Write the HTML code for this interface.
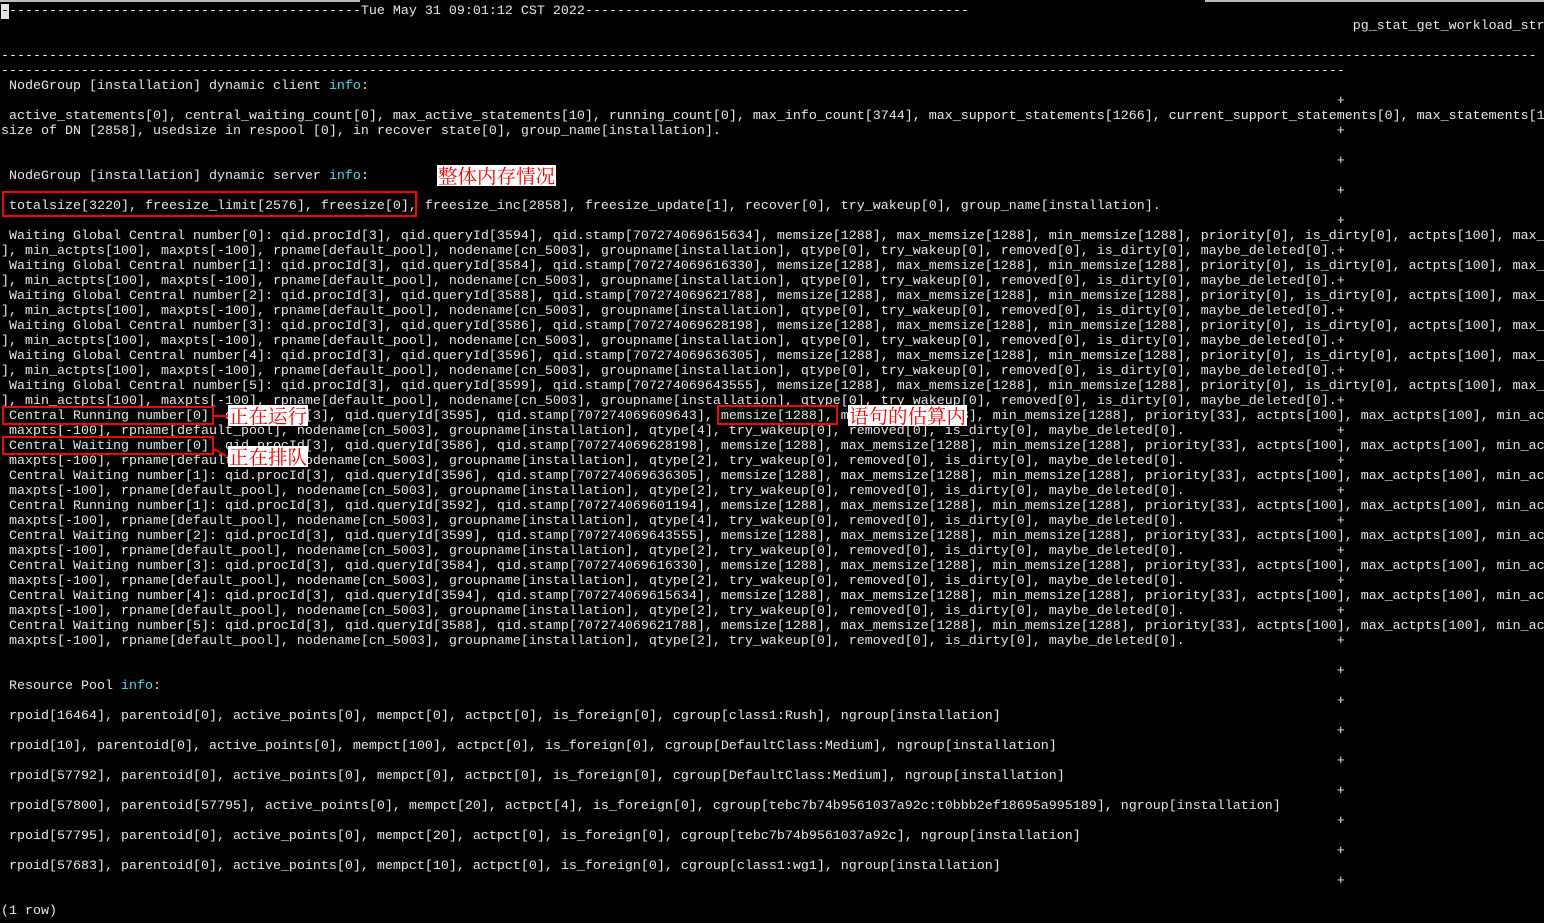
<!DOCTYPE html>
<html><head><meta charset="utf-8"><style>
html,body{margin:0;padding:0;background:#000;width:1544px;height:923px;overflow:hidden}
#w{position:absolute;left:0;top:0;width:1544px;height:923px;overflow:hidden}
pre{position:absolute;left:1px;top:4px;margin:0;font-family:"Liberation Mono","DejaVu Sans Mono",monospace;font-size:13.33px;line-height:15px;color:#e6e6e6;white-space:pre;width:1543px;overflow:hidden}
.c{color:#3fe0ea}
.cur{background:#e6e6e6;color:#000}
.box{position:absolute;border:2px solid #f00;box-sizing:border-box}
.lab{position:absolute;background:#fff;color:#f00;font-family:"Noto Serif CJK SC","Liberation Serif",serif;font-size:19.5px;line-height:21px;height:21px;white-space:nowrap;padding:0 1px}
.bar{position:absolute;top:0;height:2px;background:#bbb}
.arr{position:absolute;height:2px;background:#f00}
</style></head><body><div id="w">
<div class="bar" style="left:0;width:360px"></div>
<div class="bar" style="left:1205px;width:339px"></div>
<pre><span class="cur">-</span>--------------------------------------------Tue May 31 09:01:12 CST 2022------------------------------------------------
                                                                                                                                                                         pg_stat_get_workload_str

------------------------------------------------------------------------------------------------------------------------------------------------------------------------------------------------
------------------------------------------------------------------------------------------------------------------------------------------------------------------------
 NodeGroup [installation] dynamic client <span class="c">info</span>:
                                                                                                                                                                       +
 active_statements[0], central_waiting_count[0], max_active_statements[10], running_count[0], max_info_count[3744], max_support_statements[1266], current_support_statements[0], max_statements[1
size of DN [2858], usedsize in respool [0], in recover state[0], group_name[installation].                                                                             +

                                                                                                                                                                       +
 NodeGroup [installation] dynamic server <span class="c">info</span>:
                                                                                                                                                                       +
 totalsize[3220], freesize_limit[2576], freesize[0], freesize_inc[2858], freesize_update[1], recover[0], try_wakeup[0], group_name[installation].
                                                                                                                                                                       +
 Waiting Global Central number[0]: qid.procId[3], qid.queryId[3594], qid.stamp[707274069615634], memsize[1288], max_memsize[1288], min_memsize[1288], priority[0], is_dirty[0], actpts[100], max_
], min_actpts[100], maxpts[-100], rpname[default_pool], nodename[cn_5003], groupname[installation], qtype[0], try_wakeup[0], removed[0], is_dirty[0], maybe_deleted[0].+
 Waiting Global Central number[1]: qid.procId[3], qid.queryId[3584], qid.stamp[707274069616330], memsize[1288], max_memsize[1288], min_memsize[1288], priority[0], is_dirty[0], actpts[100], max_
], min_actpts[100], maxpts[-100], rpname[default_pool], nodename[cn_5003], groupname[installation], qtype[0], try_wakeup[0], removed[0], is_dirty[0], maybe_deleted[0].+
 Waiting Global Central number[2]: qid.procId[3], qid.queryId[3588], qid.stamp[707274069621788], memsize[1288], max_memsize[1288], min_memsize[1288], priority[0], is_dirty[0], actpts[100], max_
], min_actpts[100], maxpts[-100], rpname[default_pool], nodename[cn_5003], groupname[installation], qtype[0], try_wakeup[0], removed[0], is_dirty[0], maybe_deleted[0].+
 Waiting Global Central number[3]: qid.procId[3], qid.queryId[3586], qid.stamp[707274069628198], memsize[1288], max_memsize[1288], min_memsize[1288], priority[0], is_dirty[0], actpts[100], max_
], min_actpts[100], maxpts[-100], rpname[default_pool], nodename[cn_5003], groupname[installation], qtype[0], try_wakeup[0], removed[0], is_dirty[0], maybe_deleted[0].+
 Waiting Global Central number[4]: qid.procId[3], qid.queryId[3596], qid.stamp[707274069636305], memsize[1288], max_memsize[1288], min_memsize[1288], priority[0], is_dirty[0], actpts[100], max_
], min_actpts[100], maxpts[-100], rpname[default_pool], nodename[cn_5003], groupname[installation], qtype[0], try_wakeup[0], removed[0], is_dirty[0], maybe_deleted[0].+
 Waiting Global Central number[5]: qid.procId[3], qid.queryId[3599], qid.stamp[707274069643555], memsize[1288], max_memsize[1288], min_memsize[1288], priority[0], is_dirty[0], actpts[100], max_
], min_actpts[100], maxpts[-100], rpname[default_pool], nodename[cn_5003], groupname[installation], qtype[0], try_wakeup[0], removed[0], is_dirty[0], maybe_deleted[0].+
 Central Running number[0]: qid.procId[3], qid.queryId[3595], qid.stamp[707274069609643], memsize[1288], max_memsize[1288], min_memsize[1288], priority[33], actpts[100], max_actpts[100], min_ac
 maxpts[-100], rpname[default_pool], nodename[cn_5003], groupname[installation], qtype[4], try_wakeup[0], removed[0], is_dirty[0], maybe_deleted[0].                   +
 Central Waiting number[0]: qid.procId[3], qid.queryId[3586], qid.stamp[707274069628198], memsize[1288], max_memsize[1288], min_memsize[1288], priority[33], actpts[100], max_actpts[100], min_ac
 maxpts[-100], rpname[default_pool], nodename[cn_5003], groupname[installation], qtype[2], try_wakeup[0], removed[0], is_dirty[0], maybe_deleted[0].                   +
 Central Waiting number[1]: qid.procId[3], qid.queryId[3596], qid.stamp[707274069636305], memsize[1288], max_memsize[1288], min_memsize[1288], priority[33], actpts[100], max_actpts[100], min_ac
 maxpts[-100], rpname[default_pool], nodename[cn_5003], groupname[installation], qtype[2], try_wakeup[0], removed[0], is_dirty[0], maybe_deleted[0].                   +
 Central Running number[1]: qid.procId[3], qid.queryId[3592], qid.stamp[707274069601194], memsize[1288], max_memsize[1288], min_memsize[1288], priority[33], actpts[100], max_actpts[100], min_ac
 maxpts[-100], rpname[default_pool], nodename[cn_5003], groupname[installation], qtype[4], try_wakeup[0], removed[0], is_dirty[0], maybe_deleted[0].                   +
 Central Waiting number[2]: qid.procId[3], qid.queryId[3599], qid.stamp[707274069643555], memsize[1288], max_memsize[1288], min_memsize[1288], priority[33], actpts[100], max_actpts[100], min_ac
 maxpts[-100], rpname[default_pool], nodename[cn_5003], groupname[installation], qtype[2], try_wakeup[0], removed[0], is_dirty[0], maybe_deleted[0].                   +
 Central Waiting number[3]: qid.procId[3], qid.queryId[3584], qid.stamp[707274069616330], memsize[1288], max_memsize[1288], min_memsize[1288], priority[33], actpts[100], max_actpts[100], min_ac
 maxpts[-100], rpname[default_pool], nodename[cn_5003], groupname[installation], qtype[2], try_wakeup[0], removed[0], is_dirty[0], maybe_deleted[0].                   +
 Central Waiting number[4]: qid.procId[3], qid.queryId[3594], qid.stamp[707274069615634], memsize[1288], max_memsize[1288], min_memsize[1288], priority[33], actpts[100], max_actpts[100], min_ac
 maxpts[-100], rpname[default_pool], nodename[cn_5003], groupname[installation], qtype[2], try_wakeup[0], removed[0], is_dirty[0], maybe_deleted[0].                   +
 Central Waiting number[5]: qid.procId[3], qid.queryId[3588], qid.stamp[707274069621788], memsize[1288], max_memsize[1288], min_memsize[1288], priority[33], actpts[100], max_actpts[100], min_ac
 maxpts[-100], rpname[default_pool], nodename[cn_5003], groupname[installation], qtype[2], try_wakeup[0], removed[0], is_dirty[0], maybe_deleted[0].                   +

                                                                                                                                                                       +
 Resource Pool <span class="c">info</span>:
                                                                                                                                                                       +
 rpoid[16464], parentoid[0], active_points[0], mempct[0], actpct[0], is_foreign[0], cgroup[class1:Rush], ngroup[installation]
                                                                                                                                                                       +
 rpoid[10], parentoid[0], active_points[0], mempct[100], actpct[0], is_foreign[0], cgroup[DefaultClass:Medium], ngroup[installation]
                                                                                                                                                                       +
 rpoid[57792], parentoid[0], active_points[0], mempct[0], actpct[0], is_foreign[0], cgroup[DefaultClass:Medium], ngroup[installation]
                                                                                                                                                                       +
 rpoid[57800], parentoid[57795], active_points[0], mempct[20], actpct[4], is_foreign[0], cgroup[tebc7b74b9561037a92c:t0bbb2ef18695a995189], ngroup[installation]
                                                                                                                                                                       +
 rpoid[57795], parentoid[0], active_points[0], mempct[20], actpct[0], is_foreign[0], cgroup[tebc7b74b9561037a92c], ngroup[installation]
                                                                                                                                                                       +
 rpoid[57683], parentoid[0], active_points[0], mempct[10], actpct[0], is_foreign[0], cgroup[class1:wg1], ngroup[installation]
                                                                                                                                                                       +

(1 row)</pre>
<div class="box" style="left:2px;top:191px;width:415px;height:26px"></div>
<div class="box" style="left:2px;top:406px;width:212px;height:19px"></div>
<div class="box" style="left:2px;top:436px;width:212px;height:19px"></div>
<div class="box" style="left:717px;top:405px;width:121px;height:20px"></div>
<div class="arr" style="left:214px;top:415px;width:14px"></div>
<div class="arr" style="left:214px;top:448px;width:14px;transform:rotate(30deg);transform-origin:left"></div>
<div class="lab" style="left:437px;top:165px">整体内存情况</div>
<div class="lab" style="left:228px;top:405px">正在运行</div>
<div class="lab" style="left:228px;top:446px">正在排队</div>
<div class="lab" style="left:848px;top:405px">语句的估算内</div>
</div></body></html>
